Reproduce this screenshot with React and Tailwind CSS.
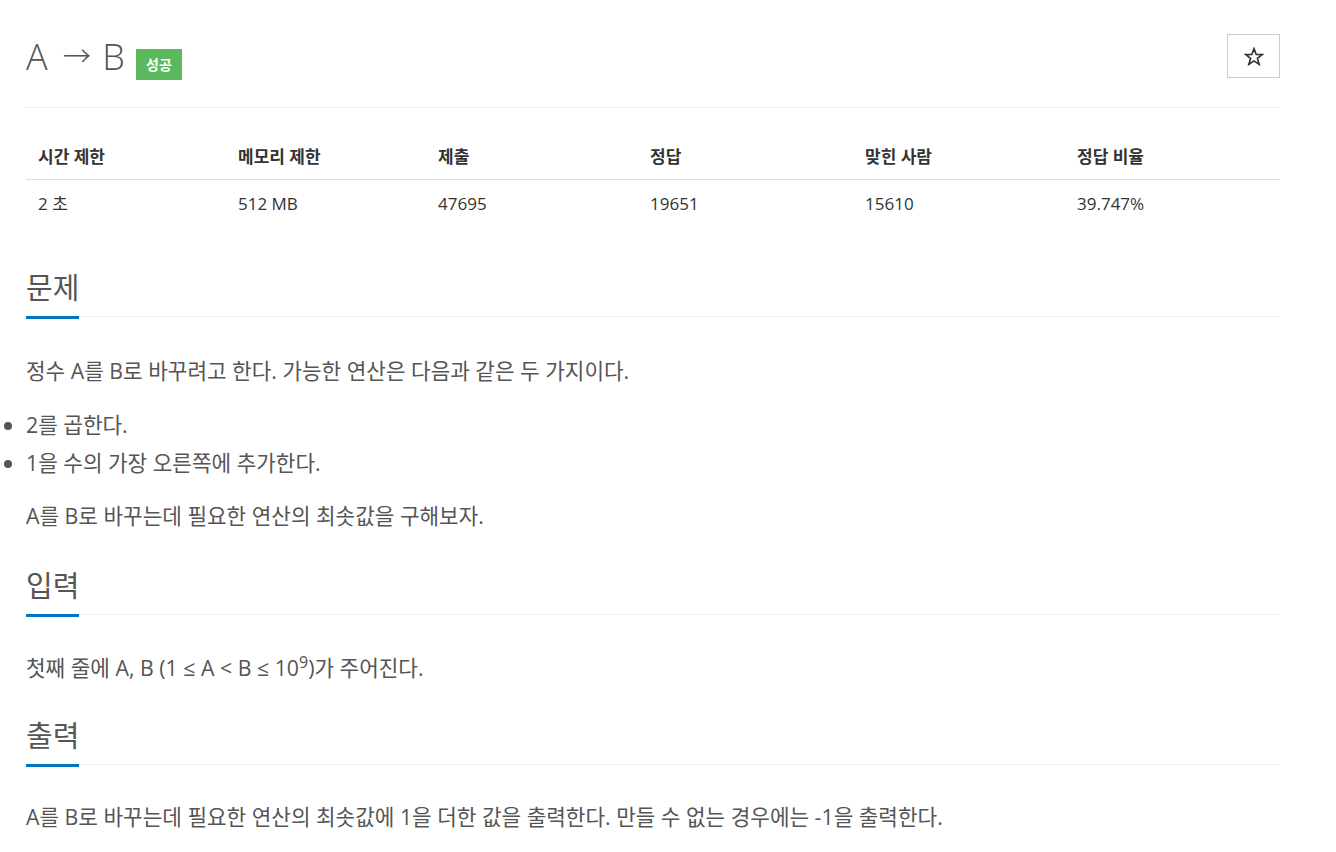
export default function App() {
  const font = { fontFamily: '"Open Sans", "Noto Sans CJK KR", sans-serif' };
  const cols = [
    ["시간 제한", "2 초", "w-[200px]"],
    ["메모리 제한", "512 MB", "w-[200px]"],
    ["제출", "47695", "w-[212px]"],
    ["정답", "19651", "w-[215px]"],
    ["맞힌 사람", "15610", "w-[212px]"],
    ["정답 비율", "39.747%", "w-[215px]"],
  ];
  const Headline = ({ children, className }) => (
    <div className={"border-b border-dotted border-[#ddd] " + className}>
      <h2 className="inline-block text-[29px] leading-[32px] font-normal text-[#555] pb-[12px] border-b-[3px] border-[#0076c0] -mb-[3px] relative">
        {children}
      </h2>
    </div>
  );
  return (
    <div className="bg-white min-h-[852px] w-[1336px]" style={font}>
      <div className="ml-[26px] w-[1254px]">
        <div className="flex items-start justify-between pt-[34px] pb-[27px] border-b border-[#eee]">
          <div className="flex items-start mt-[3px]">
            <h1 className="text-[36px] leading-[40px] font-light text-[#555]">
              A <span className="text-[28px] ml-[6px] mr-[2px] relative -top-[3px]">→</span> B
            </h1>
            <span className="ml-[11px] mt-[12px] w-[46px] h-[31px] flex items-center justify-center bg-[#5cb85c] text-white text-[14px] font-semibold">
              성공
            </span>
          </div>
          <button className="w-[53px] h-[44px] border border-[#ccc] bg-white flex items-center justify-center text-[#333]">
            <svg width="20" height="19" viewBox="0 0 24 23" fill="none" stroke="#333" strokeWidth="2" strokeLinejoin="miter">
              <path d="M12 2 L14.6 9 L22 9.2 L16.2 13.8 L18.2 21 L12 16.8 L5.8 21 L7.8 13.8 L2 9.2 L9.4 9 Z" />
            </svg>
          </button>
        </div>

        <div className="mt-[26px]">
          <div className="flex h-[46px] items-center border-b border-[#ddd]">
            {cols.map(([h, , w]) => (
              <div key={h} className={w + " pl-[12px] text-[17px] font-bold text-[#333]"}>
                {h}
              </div>
            ))}
          </div>
          <div className="flex h-[47px] items-center">
            {cols.map(([h, v, w]) => (
              <div key={h} className={w + " pl-[12px] text-[17px] text-[#333]"}>
                {v}
              </div>
            ))}
          </div>
        </div>

        <Headline className="mt-[45px]">문제</Headline>
        <div className="mt-[39px] text-[21.3px] leading-[30px] text-[#555]">
          <p>정수 A를 B로 바꾸려고 한다. 가능한 연산은 다음과 같은 두 가지이다.</p>
          <ul className="list-disc list-outside pl-0 mt-[24px] mb-[23px] flex flex-col gap-[8px]">
            <li className="list-item">2를 곱한다.</li>
            <li className="list-item">1을 수의 가장 오른쪽에 추가한다.</li>
          </ul>
          <p>A를 B로 바꾸는데 필요한 연산의 최솟값을 구해보자.</p>
        </div>

        <Headline className="mt-[39px]">입력</Headline>
        <div className="mt-[38px] text-[21.3px] leading-[30px] text-[#555]">
          <p>
            첫째 줄에 A, B (1 ≤ A &lt; B ≤ 10<sup>9</sup>)가 주어진다.
          </p>
        </div>

        <Headline className="mt-[37px]">출력</Headline>
        <div className="mt-[37px] text-[21.3px] leading-[30px] text-[#555]">
          <p>A를 B로 바꾸는데 필요한 연산의 최솟값에 1을 더한 값을 출력한다. 만들 수 없는 경우에는 -1을 출력한다.</p>
        </div>
      </div>
    </div>
  );
}
